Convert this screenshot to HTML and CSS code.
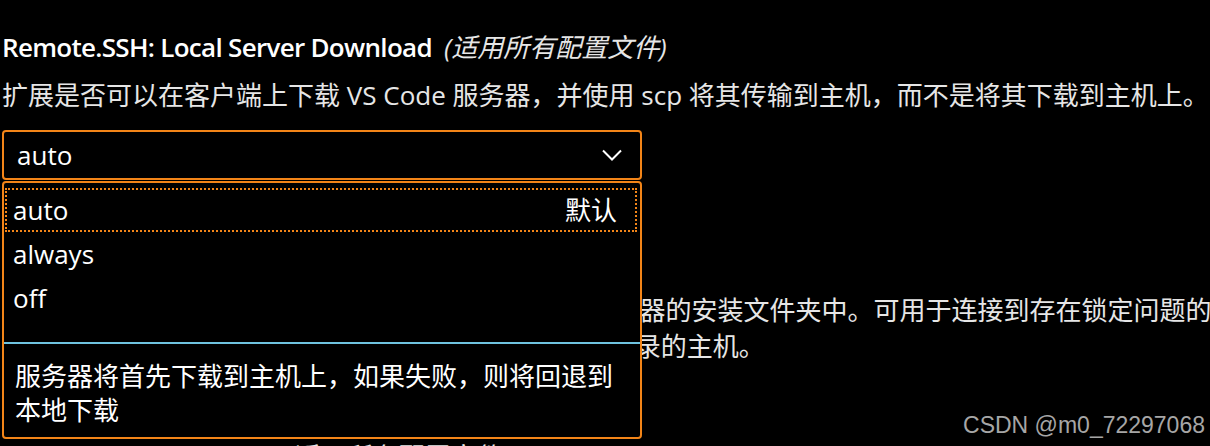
FILE: index.html
```html
<!DOCTYPE html>
<html lang="zh-CN">
<head>
<meta charset="utf-8">
<title>Remote.SSH settings</title>
<link rel="stylesheet" href="styles.css">
</head>
<body>
<div class="page">
  <section class="setting setting-first">
    <div class="setting-title"><span class="title-key">Remote.SSH: Local Server Download</span><span class="title-scope">(适用所有配置文件)</span></div>
    <div class="setting-desc">扩展是否可以在客户端上下载 VS Code 服务器，并使用 scp 将其传输到主机，而不是将其下载到主机上。</div>
    <div class="select">
      <span class="select-value">auto</span>
      <svg class="chevron" width="20" height="12" viewBox="0 0 20 12"><path d="M1 1.5 L10 10.5 L19 1.5" fill="none" stroke="#ffffff" stroke-width="2"/></svg>
    </div>
  </section>

  <section class="setting setting-second">
    <div class="setting-title"><span class="title-key">Remote.SSH: Lockfiles In Tmp</span></div>
    <div class="setting-desc setting-desc-lines">
      <div class="desc-line">如果已启用则将在/tmp 中创建锁定文件，而不是在服务器的安装文件夹中。可用于连接到存在锁定问题的主机，例如</div>
      <div class="desc-line">主机，例如使用 NFS 或其他网络文件系统作为用户主目录的主机。</div>
    </div>
  </section>

  <section class="setting setting-third">
    <div class="setting-title"><span class="title-key">Remote.SSH: Log Level</span><span class="title-scope">(适用所有配置文件)</span></div>
  </section>

  <div class="dropdown">
    <ul class="options">
      <li class="option option-focused"><span>auto</span><span class="option-default">默认</span></li>
      <li class="option"><span>always</span></li>
      <li class="option"><span>off</span></li>
    </ul>
    <div class="option-detail">服务器将首先下载到主机上，如果失败，则将回退到本地下载</div>
  </div>

  <div class="watermark">CSDN @m0_72297068</div>
</div>
</body>
</html>
```

FILE: styles.css
```css
html, body {
  margin: 0;
  padding: 0;
  background: #000000;
  overflow: hidden;
}

body {
  width: 1210px;
  height: 446px;
  font-family: "Segoe UI", "Open Sans", "Noto Sans CJK SC", sans-serif;
  font-size: 26px;
  color: #ffffff;
}

.page {
  position: relative;
  height: 446px;
  padding: 29px 0 0 2px;
  box-sizing: border-box;
  overflow: hidden;
}

.setting-title {
  line-height: 36px;
  height: 36px;
  white-space: nowrap;
  color: #ffffff;
}

.title-key {
  font-weight: 600;
  letter-spacing: -0.7px;
}

.title-scope {
  font-style: italic;
  color: #e6e6e6;
  margin-left: 12px;
}

.setting-desc {
  margin-top: 12px;
  line-height: 36px;
  color: #e6e6e6;
  white-space: nowrap;
}

.select {
  margin-top: 17px;
  width: 640px;
  height: 50px;
  box-sizing: border-box;
  border: 2px solid #f38518;
  border-radius: 4px;
  display: flex;
  align-items: center;
  justify-content: space-between;
  padding: 0 18px 0 13px;
  line-height: 36px;
}

.chevron {
  display: block;
}

.setting-second {
  margin-top: 64px;
}

.desc-line {
  height: 36px;
}

.setting-third {
  margin-top: 74px;
}

.dropdown {
  position: absolute;
  top: 181px;
  left: 2px;
  width: 640px;
  height: 258px;
  box-sizing: border-box;
  background: #000000;
  border: 2px solid #f38518;
  border-radius: 4px;
  display: flex;
  flex-direction: column;
}

.options {
  list-style: none;
  margin: 0;
  padding: 5px 3px 22px 1px;
  border-bottom: 2px solid #6fc3df;
}

.option {
  height: 44px;
  box-sizing: border-box;
  border: 2px dotted transparent;
  display: flex;
  align-items: center;
  justify-content: space-between;
  padding: 0 18px 0 6px;
  line-height: 36px;
}

.option-focused {
  border-color: #f38518;
}

.option-detail {
  padding: 15px 20px 0 11px;
  line-height: 34px;
  color: #ffffff;
}

.watermark {
  position: absolute;
  right: 5px;
  top: 411px;
  font-family: "Liberation Sans", Arial, sans-serif;
  font-size: 23px;
  line-height: 28px;
  color: #a6a6a6;
}
```
